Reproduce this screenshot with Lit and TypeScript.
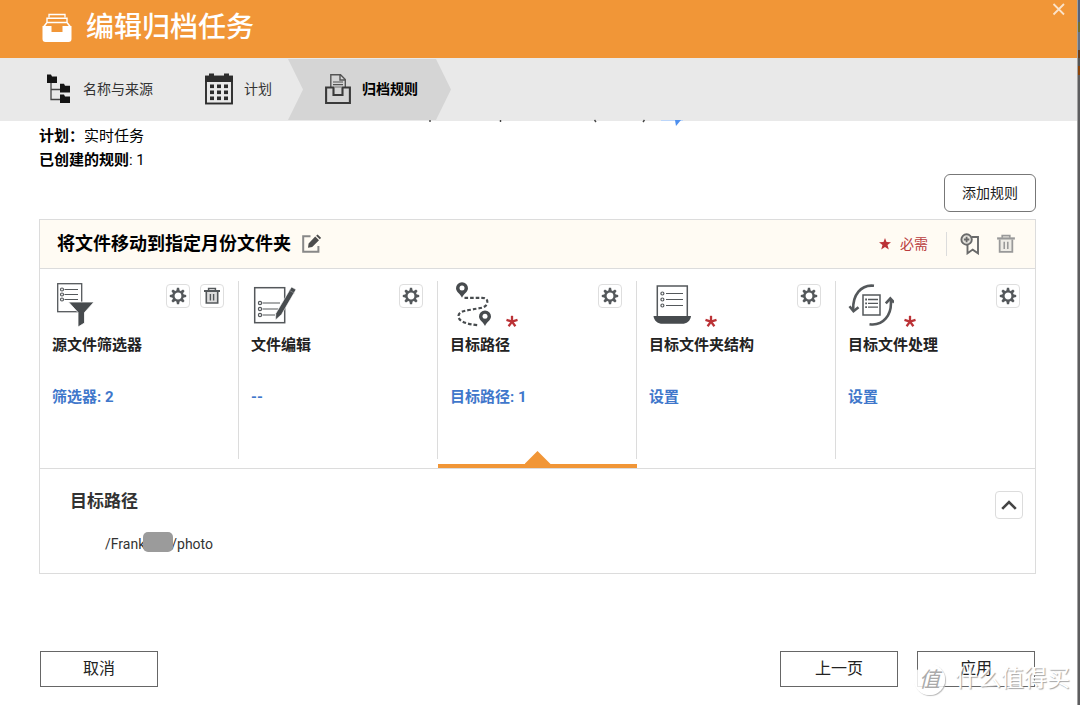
import { LitElement, html, svg, css, nothing } from "lit";
import { customElement, property } from "lit/decorators.js";
import { classMap } from "lit/directives/class-map.js";

const gearIcon = html`<svg width="18" height="18" viewBox="0 0 18 18" aria-hidden="true">
  <g fill="#54585b">
    ${[0, 45, 90, 135, 180, 225, 270, 315].map(
      (a) => svg`<path d="M7.3 4 L7.9 0.8 H10.1 L10.7 4 Z" transform="rotate(${a} 9 9)" />`
    )}
  </g>
  <circle cx="9" cy="9" r="4.6" fill="none" stroke="#54585b" stroke-width="2.4" />
</svg>`;

const trashIcon = (size: number, color: string, fill: string) => html`<svg
  width=${size} height=${size} viewBox="0 0 18 18" aria-hidden="true" fill="none" stroke=${color}>
  <path d="M3.3 5 V16 H14.7 V5" fill=${fill} stroke-width="1.6" />
  <path d="M1 4 H17" stroke-width="2" />
  <path d="M5.6 3.4 V1.4 H12.4 V3.4" stroke-width="1.5" />
  <path d="M7.4 7 V13.5 M10.6 7 V13.5" stroke-width="1.4" />
</svg>`;

const requiredMark = html`<svg class="mark" width="12" height="12" viewBox="0 0 12 12" role="img" aria-label="必需">
  <g stroke="#bb3236" stroke-width="2.3">
    ${[0, 72, 144, 216, 288].map((a) => svg`<path d="M6 6.6 V0.8" transform="rotate(${a} 6 6.6)" />`)}
  </g>
</svg>`;

const filterIcon = html`<svg width="44" height="46" viewBox="0 0 44 46" fill="none" stroke="#54585b" aria-hidden="true">
  <rect x="5.7" y="2.7" width="24" height="28" stroke-width="1.3" />
  <g stroke-width="1.2">
    <circle cx="10" cy="8.5" r="1.5" /><circle cx="10" cy="13.5" r="1.5" /><circle cx="10" cy="18.5" r="1.5" />
    <path d="M12.5 8.5 H26 M12.5 13.5 H26 M12.5 18.5 H26" />
  </g>
  <path d="M16.5 21 H42 L32.5 31.5 V42 L26 46 V31.5 Z" fill="#474b4e" stroke="#fff" stroke-width="0.8" />
</svg>`;

const editFileIcon = html`<svg width="48" height="46" viewBox="0 0 48 46" fill="none" stroke="#54585b" aria-hidden="true">
  <rect x="3.7" y="6.7" width="30" height="35" stroke-width="1.5" />
  <g stroke-width="1.2">
    <circle cx="9" cy="22" r="1.6" /><circle cx="9" cy="28" r="1.6" /><circle cx="9" cy="34" r="1.6" />
    <path d="M11.5 22 H29 M11.5 28 H27 M11.5 34 H24" />
  </g>
  <path d="M40.5 6 L45 8.6 L30.5 33.5 L24.5 39 L24.8 32.5 Z" fill="#474b4e" stroke="#fff" stroke-width="0.6" />
  <path d="M38.5 9.4 L43.2 12.2" stroke="#8b8e90" stroke-width="0.8" />
</svg>`;

const pin = (x: number, y: number) => svg`<g transform="translate(${x} ${y})">
  <path d="M6 15.5 C4.6 11.6 0 9.6 0 5.9 A6 5.9 0 0 1 12 5.9 C12 9.6 7.4 11.6 6 15.5 Z" fill="#474b4e" />
  <circle cx="6" cy="5.8" r="2.5" fill="#fff" />
</g>`;

const routeIcon = html`<svg width="46" height="46" viewBox="0 0 46 46" fill="none" aria-hidden="true">
  <path d="M14.5 16.8 H32 C37 16.8 38.5 20 36.5 23.5 C34.5 27.5 29 27 21 28.7 C14 29.8 8.5 31 8.5 35 C8.5 40.5 16 43 28 44.2"
    stroke="#474b4e" stroke-width="2.2" stroke-dasharray="3.6 2" />
  ${pin(6, 1.3)} ${pin(29, 29.5)}
</svg>`;

const structureIcon = html`<svg width="46" height="46" viewBox="0 0 46 46" fill="none" stroke="#54585b" aria-hidden="true">
  <rect x="8.3" y="5" width="30" height="32" stroke-width="1.5" />
  <g stroke-width="1.2">
    <circle cx="13.4" cy="12.5" r="1.5" /><circle cx="13.4" cy="18.5" r="1.5" /><circle cx="13.4" cy="24.5" r="1.5" />
    <path d="M17 12.5 H34 M17 18.5 H34 M17 24.5 H34" />
  </g>
  <path d="M4.5 35 H42 C41.5 40 37.5 42.8 33 42.8 H13.5 C9 42.8 5 40 4.5 35 Z" fill="#474b4e" stroke="none" />
</svg>`;

const processIcon = html`<svg width="46" height="46" viewBox="0 0 46 46" fill="none" stroke="#54585b" aria-hidden="true">
  <g stroke-width="2.6">
    <path d="M26 4.8 C13 3.2 4.5 14 5.2 29" />
    <path d="M1.5 25.2 L5.5 30.2 L10.5 26.2" />
    <path d="M21.5 43.2 C35 45.2 44.5 34 42.7 18.5" />
    <path d="M37.8 22.3 L42.3 17.5 L46 21.5" />
  </g>
  <rect x="15" y="14" width="17" height="20" stroke-width="1.5" />
  <g stroke-width="1.3">
    <path d="M17.2 18.5 H19 M17.2 22.3 H19 M17.2 26.1 H19" stroke-width="1.8" />
    <path d="M20 18.5 H30 M20 22.3 H30 M20 26.1 H30" />
  </g>
</svg>`;

interface RuleStep {
  title: string;
  link: string;
  icon: unknown;
  required?: boolean;
  removable?: boolean;
  active?: boolean;
}

const RULE_STEPS: RuleStep[] = [
  { title: "源文件筛选器", link: "筛选器: 2", icon: filterIcon, removable: true },
  { title: "文件编辑", link: "--", icon: editFileIcon },
  { title: "目标路径", link: "目标路径: 1", icon: routeIcon, required: true, active: true },
  { title: "目标文件夹结构", link: "设置", icon: structureIcon, required: true },
  { title: "目标文件处理", link: "设置", icon: processIcon, required: true },
];

@customElement("rule-step")
class RuleStepElement extends LitElement {
  @property({ attribute: false }) step!: RuleStep;

  static styles = css`
    :host { display: block; flex: 1 1 0; min-width: 0; position: relative; }
    .inner { margin: 12px 0 9px; padding: 0 14px 0 12px; height: 178px; border-right: 1px solid #dcdcdc; }
    :host(:last-of-type) .inner { border-color: transparent; }
    .top { display: flex; height: 46px; }
    .picture { display: flex; align-items: flex-end; gap: 10px; flex: 1; }
    .picture svg { display: block; }
    .tools { display: flex; gap: 10px; align-self: flex-start; margin-top: 3px; }
    button { display: grid; place-items: center; width: 24px; height: 24px; padding: 0; background: #fff; border: 1px solid #dedede; border-radius: 4px; }
    h3 { margin: 6px 0 28px; font-size: 15px; line-height: 24px; font-weight: 700; color: #222; white-space: nowrap; }
    a { display: block; font-size: 15px; line-height: 24px; font-weight: 700; color: #3f77cb; text-decoration: none; }
    .bar { position: absolute; left: 0; right: 0; bottom: 0; height: 4px; background: #f19637; }
    .bar::before { content: ""; position: absolute; left: calc(50% - 13px); bottom: 4px; width: 26px; height: 13px; background: #f19637; clip-path: polygon(50% 0, 100% 100%, 0 100%); }
  `;

  render() {
    const s = this.step;
    return html`
      <div class="inner">
        <div class="top">
          <div class="picture">${s.icon}${s.required ? requiredMark : nothing}</div>
          <div class="tools">
            <button aria-label="设置">${gearIcon}</button>
            ${s.removable ? html`<button aria-label="删除">${trashIcon(18, "#54585b", "#ddd")}</button>` : nothing}
          </div>
        </div>
        <h3>${s.title}</h3>
        <a href="#">${s.link}</a>
      </div>
      ${s.active ? html`<div class="bar"></div>` : nothing}
    `;
  }
}

const archiveIcon = html`<svg width="30" height="30" viewBox="0 0 30 30" aria-hidden="true" fill="none" stroke="#fff">
  <path d="M7 4.5 V1.5 H23 V4.5" stroke-width="1.3" />
  <path d="M5 9 V5.3 H25 V9" stroke-width="1.4" />
  <path d="M1.5 14 L5 9.5 H25 L28.5 14" stroke-width="1.5" />
  <path d="M0.5 13 H9.5 V19 H20.5 V13 H29.5 V26 Q29.5 29 26.5 29 H3.5 Q0.5 29 0.5 26 Z" fill="#fff" stroke="none" />
</svg>`;

const treeIcon = html`<svg width="26" height="30" viewBox="0 0 26 30" aria-hidden="true">
  <path d="M5 9 V25.5 H14 M5 15.5 H14" fill="none" stroke="#444" stroke-width="1.3" />
  <g fill="#141414">
    <path d="M1 0.5 H5 L6 2.5 H11 V9 H1 Z" />
    <path d="M14 9.7 H18 L19 11.7 H24 V18.5 H14 Z" />
    <path d="M14 20.5 H18 L19 22.5 H24 V29 H14 Z" />
  </g>
</svg>`;

const calendarIcon = html`<svg width="28" height="32" viewBox="0 0 28 32" aria-hidden="true">
  <rect x="1" y="3.5" width="26" height="27" fill="none" stroke="#2d2d2d" stroke-width="1.9" />
  <path d="M0 3 H4 V0.5 H9 V3 H19 V0.5 H24 V3 H28 V9 H0 Z" fill="#2d2d2d" />
  <g fill="#2d2d2d">
    ${[11.5, 17.5, 23.5].map((y) => [5, 12, 19].map((x) => svg`<rect x=${x} y=${y} width="4" height="3.6" />`))}
  </g>
</svg>`;

const rulesIcon = html`<svg width="26" height="30" viewBox="0 0 26 30" aria-hidden="true" fill="none">
  <path d="M5.8 13 V0.8 H15.5 L20.3 5.5 V13 M15 0.8 V6 H20.3" stroke="#555" stroke-width="1.4" />
  <path d="M8 8 H18 M8 10.6 H18" stroke="#555" stroke-width="1.2" />
  <path d="M1.1 13.5 H8.5 V21 H17.5 V13.5 H24.9 V29 H1.1 Z" stroke="#3a3a3a" stroke-width="2.1" />
  <path d="M10 13 H16" stroke="#777" stroke-width="1" />
</svg>`;

const renameIcon = html`<svg width="20" height="20" viewBox="0 0 20 20" aria-hidden="true" fill="none">
  <path d="M9.5 2.2 H2.2 V17.8 H17.4 V12" stroke="#888" stroke-width="2" />
  <path d="M7 13.8 L7.6 9.4 L14.2 2.6 L18 6.2 L11.2 13 Z M15.1 1.8 L16.6 0.4 L20.2 3.9 L18.8 5.3 Z" fill="#4c4c4c" />
</svg>`;

const bookmarkIcon = html`<svg width="20" height="22" viewBox="0 0 20 22" aria-hidden="true" fill="none" stroke="#6a6a6a">
  <path d="M11.5 4 H18 V20.3 L12.7 16.6 L7.5 20.3 V11" stroke-width="1.9" />
  <circle cx="6.6" cy="6.5" r="5.2" fill="#e4e2dc" stroke-width="1.9" />
  <path d="M3.9 6.5 H9.3 M6.6 3.8 V9.2" stroke-width="1.8" />
</svg>`;

@customElement("app-root")
class AppRoot extends LitElement {
  static styles = css`
    :host { display: flex; min-height: 100vh; position: relative; overflow: hidden; background: #fff; color: #222; font-family: Roboto, "Noto Sans CJK SC", sans-serif; font-size: 15px; line-height: 24px; }
    * { box-sizing: border-box; }
    svg { display: block; flex: none; }
    button { font: inherit; color: inherit; padding: 0; background: none; border: 0; }
    .dialog { flex: 1; min-width: 0; display: flex; flex-direction: column; }
    .edge { width: 3px; background: linear-gradient(#56627a 0 22px, #756d2b 22px 32px, #687282 32px 50px, #6b3c17 50px 58px, #555 58px 66px, #8c450b 66px 75px, #5d5d5f 75px); border-left: 1px solid #a2a2a2; }
    header { display: flex; align-items: center; gap: 14px; height: 58px; padding: 0 12px 0 42px; background: #f19637; color: #fff; }
    h1 { flex: 1; margin: 0 0 2px; font-size: 28px; line-height: 40px; font-weight: 500; }
    .archive { margin-bottom: 3px; }
    .close { align-self: flex-start; margin-top: 3px; }
    ol { display: flex; list-style: none; margin: 0; padding: 1px 0 1px 46px; height: 63px; background: #e9e9e9; font-size: 14px; color: #333; }
    li { display: flex; align-items: center; gap: 11px; padding-bottom: 1px; }
    .plan { margin: 0 16px 0 52px; }
    .current { padding: 0 33px 1px 37px; background: #d5d5d5; color: #000; font-weight: 700; clip-path: polygon(0 0, calc(100% - 15px) 0, 100% 50%, calc(100% - 15px) 100%, 0 100%, 15px 50%); }
    main { padding: 0 41px 0 39px; }
    .trace { margin-left: 388px; overflow: visible; }
    .summary { margin: 0; color: #000; }
    .summary b { font-weight: 700; }
    .add { display: block; margin: 2px 0 7px auto; height: 38px; padding: 0 17px; font-size: 14px; border: 1px solid #777; border-radius: 6px; background: #fff; }
    .card { border: 1px solid #dcdcdc; }
    .card-head { display: flex; align-items: center; height: 49px; padding: 0 19px 0 17px; background: #fffbf3; border-bottom: 1px solid #dcdcdc; }
    h2 { margin: 0 10px 0 0; font-size: 18px; line-height: 24px; font-weight: 700; color: #000; }
    .legend { display: flex; align-items: center; gap: 9px; margin-left: auto; padding-right: 18px; font-size: 14px; color: #b93b3d; border-right: 1px solid #dcdcdc; }
    .save { margin: 0 16px 0 13px; }
    .steps { display: flex; border-bottom: 1px solid #dcdcdc; }
    .panel { display: flex; align-items: flex-start; justify-content: space-between; padding: 20px 12px 16px 30px; }
    .panel h2 { margin: 0 0 19px; font-size: 17px; color: #333; }
    .path { display: flex; margin: 0 0 1px 35px; font-size: 14px; color: #333; }
    .mask { width: 30px; height: 20px; margin: 0 -2px; border-radius: 5px; background: #9b9b9b; position: relative; }
    .collapse { display: grid; place-items: center; width: 28px; height: 28px; margin-top: 2px; border: 1px solid #dcdcdc; border-radius: 4px; }
    footer { display: flex; gap: 19px; margin-top: 77px; padding: 0 42px 18px 40px; font-size: 16px; }
    footer button { width: 118px; height: 36px; border: 1px solid #666; background: #fff; }
    .cancel { margin-right: auto; }
    .watermark { position: absolute; right: 10px; bottom: 10px; display: flex; align-items: center; gap: 10px; color: #fff; font-size: 23px; line-height: 32px; text-shadow: 1px 1px 1px #a4a4a4; }
    .badge { display: grid; place-items: center; width: 31px; height: 31px; border-radius: 50%; background: #ffffffd8; color: #aaa; font-size: 21px; font-style: italic; text-shadow: none; box-shadow: 1px 1px 1px #bbb; }
  `;

  render() {
    return html`
      <div class="dialog">
        <header>
          <div class="archive">${archiveIcon}</div>
          <h1>编辑归档任务</h1>
          <button class="close" aria-label="关闭">
            <svg width="13" height="13" viewBox="0 0 13 13" stroke="#fbe3ca" stroke-width="1.8"><path d="M1.5 1 L12 11.5 M12 1 L1.5 11.5" /></svg>
          </button>
        </header>
        <ol>
          <li>${treeIcon}名称与来源</li>
          <li class="plan">${calendarIcon}计划</li>
          <li class=${classMap({ current: true })} aria-current="step">${rulesIcon}归档规则</li>
        </ol>
        <main>
          <svg class="trace" width="260" height="3" viewBox="0 0 260 3" aria-hidden="true">
            <path d="M3 -1 V1 M73.5 -1 V1 M167.5 -1 L169 1 M217.5 -1 L216 1" stroke="#444" stroke-width="1.4" />
            <path d="M234 -0.5 H256" stroke="#bcd6fa" stroke-width="1" />
            <path d="M248 -1 H254 L249 5 Z" fill="#4d8fee" />
          </svg>
          <p class="summary"><b>计划：</b>实时任务</p>
          <p class="summary"><b>已创建的规则</b>: 1</p>
          <button class="add">添加规则</button>
          <section class="card">
            <div class="card-head">
              <h2>将文件移动到指定月份文件夹</h2>
              <button aria-label="重命名">${renameIcon}</button>
              <div class="legend">
                <svg width="12" height="12" viewBox="0 0 12 12" aria-hidden="true"><path d="M6 0 L7.5 4.1 L12 4.3 L8.5 7.1 L9.8 11.6 L6 9 L2.2 11.6 L3.5 7.1 L0 4.3 L4.5 4.1 Z" fill="#bb3236" /></svg>
                必需
              </div>
              <button class="save" aria-label="保存规则">${bookmarkIcon}</button>
              <button aria-label="删除规则">${trashIcon(20, "#999", "#eeece6")}</button>
            </div>
            <div class="steps">${RULE_STEPS.map((s) => html`<rule-step .step=${s}></rule-step>`)}</div>
            <div class="panel">
              <div>
                <h2>目标路径</h2>
                <p class="path">/Frank<span class="mask"></span>/photo</p>
              </div>
              <button class="collapse" aria-label="收起">
                <svg width="16" height="10" viewBox="0 0 16 10" fill="none" stroke="#444" stroke-width="2.6"><path d="M1.2 8.8 L8 2 L14.8 8.8" /></svg>
              </button>
            </div>
          </section>
        </main>
        <footer>
          <button class="cancel">取消</button>
          <button>上一页</button>
          <button>应用</button>
        </footer>
      </div>
      <div class="edge"></div>
      <div class="watermark"><span class="badge">值</span>什么值得买</div>
    `;
  }
}
